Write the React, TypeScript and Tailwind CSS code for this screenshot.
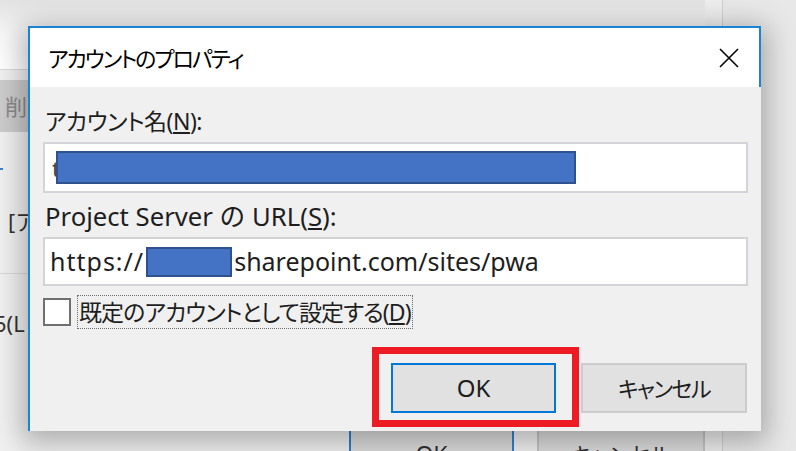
import React from "react";

const font = "font-['Noto_Sans','Noto_Sans_CJK_JP',sans-serif]";

function CloseIcon() {
  return (
    <svg width="20" height="20" viewBox="0 0 20 20">
      <path d="M1 1 L19 19 M19 1 L1 19" stroke="#000" strokeWidth="1.6" fill="none" />
    </svg>
  );
}

function Dialog() {
  return (
    <div className="absolute left-[28px] top-[26px] w-[733px] h-[405px] flex flex-col border-t-2 border-l-2 border-[#1883d7] bg-[#f0f0f0] shadow-[0_6px_26px_6px_rgba(0,0,0,0.28)]">
      <div className="h-[59px] shrink-0 bg-white border-r-2 border-[#1883d7] flex items-center justify-between pl-[18px] pr-[20px]">
        <span className="text-[22px] text-black leading-none tracking-[-2px] [font-feature-settings:'palt']">アカウントのプロパティ</span>
        <CloseIcon />
      </div>
      <div className="flex-1 flex flex-col px-[13px] text-[#1e1e1e] *:shrink-0">
        <div className="mt-[21px] pl-[2px] h-[26px] flex items-center text-[23px] leading-none tracking-[-0.5px] [font-feature-settings:'palt']">
          アカウント名(<span className="underline underline-offset-2">N</span>):
        </div>
        <div className="mt-[8px] h-[51px] bg-white border-2 border-[#d3d3d8] flex items-center pl-[7px]">
          <span className="text-[22px] text-[#444] leading-none">t</span>
          <div className="-ml-[4px] w-[520px] h-[33px] bg-[#4472c4] border-2 border-[#2f528f]" />
        </div>
        <div className="mt-[11px] pl-[2px] h-[26px] flex items-center text-[25.7px] leading-none">
          Project Server の URL(<span className="underline underline-offset-2">S</span>):
        </div>
        <div className="mt-[7px] h-[49px] bg-white border-2 border-[#d3d3d8] flex items-center pl-[5px] text-[25px] leading-none">
          <span className="tracking-[1px]">https://</span>
          <div className="w-[86px] h-[30px] bg-[#4472c4] border-2 border-[#2f528f] ml-[2px]" />
          <span className="ml-[2px]">sharepoint.com/sites/pwa</span>
        </div>
        <div className="mt-[12px] flex items-center h-[28px]">
          <div className="w-[28px] h-[28px] bg-white border-2 border-[#707070]" />
          <div className="ml-[6px] h-[34px] px-[1px] flex items-center border border-dotted border-[#6a6a6a] text-[23px] leading-none tracking-[-0.9px] [font-feature-settings:'palt']">
            既定のアカウントとして設定する(<span className="underline underline-offset-2">D</span>)
          </div>
        </div>
        <div className="mt-[37px] flex justify-end gap-[25px] pr-[1px]">
          <div className="w-[165px] h-[50px] bg-[#e1e1e1] border-2 border-[#0078d7] flex items-center justify-center text-[24px] leading-none">
            OK
          </div>
          <div className="w-[166px] h-[50px] bg-[#e1e1e1] border-2 border-[#cccccc] flex items-center justify-center text-[22px] leading-none tracking-[-1.5px] [font-feature-settings:'palt']">
            キャンセル
          </div>
        </div>
      </div>
    </div>
  );
}

function Background() {
  return (
    <div className="w-[796px] h-[451px] flex bg-[#e9e9e9]">
      <div className="w-[705px] flex flex-col">
        <div className="h-[70px] shrink-0 bg-gradient-to-b from-[#e2e2e2] via-[#f7f7f7] to-white border-b border-[#dadada]" />
        <div className="flex-1 bg-[#f0f0f0] flex flex-col text-[22px] text-[#333] *:shrink-0">
          <div className="mt-[10px] w-[40px] h-[52px] bg-[#cccccc] flex items-center pl-[5px] text-[#8a8a8a]">削</div>
          <div className="mt-[36px] w-[3px] h-[2px] bg-[#3b7fd0]" />
          <div className="mt-[38px] pl-[8px] h-[26px] flex items-center leading-none">[ア</div>
          <div className="mt-[39px] h-px w-[40px] bg-[#d8d8d8]" />
          <div className="mt-[36px] h-[26px] flex items-center leading-none -ml-[6px]">5(L</div>
          <div className="mt-[93px] flex pl-[349px] gap-[23px]">
            <div className="w-[166px] h-[40px] bg-[#dcdcdc] border-2 border-[#2f7fd0] flex justify-center pt-[12px] text-[23px] leading-none">OK</div>
            <div className="w-[169px] h-[40px] bg-[#dcdcdc] border-2 border-[#c4c4c4] flex justify-center pt-[12px] leading-none [font-feature-settings:'palt']">キャンセル</div>
          </div>
        </div>
      </div>
      <div className="w-[17px] bg-[#ededed]" />
      <div className="w-px bg-[#cfcfcf]" />
      <div className="flex-1 bg-[#e8e8e8]" />
    </div>
  );
}

export default function App() {
  return (
    <div className={`relative w-[796px] h-[451px] overflow-hidden ${font}`}>
      <Background />
      <Dialog />
      <div className="absolute left-[372px] top-[347px] w-[207px] h-[80px] border-[7px] border-[#ed1c24]" />
    </div>
  );
}
